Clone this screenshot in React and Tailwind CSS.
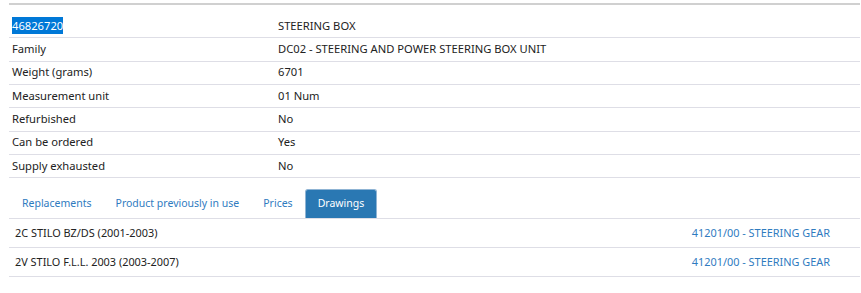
import React, { useState } from "react";

const details = [
  ["Family", "DC02 - STEERING AND POWER STEERING BOX UNIT"],
  ["Weight (grams)", "6701"],
  ["Measurement unit", "01 Num"],
  ["Refurbished", "No"],
  ["Can be ordered", "Yes"],
  ["Supply exhausted", "No"],
];

const tabs = ["Replacements", "Product previously in use", "Prices", "Drawings"];

const drawings = [
  ["2C STILO BZ/DS (2001-2003)", "41201/00 - STEERING GEAR"],
  ["2V STILO F.L.L. 2003 (2003-2007)", "41201/00 - STEERING GEAR"],
];

const App = () => {
  const [active, setActive] = useState("Drawings");

  return (
    <div className="w-[861px] h-[293px] bg-white pl-[9px] pr-[1px] pt-[3px] text-[11.2px] text-[#222] font-['Noto_Sans',sans-serif]">
      {/* Part details */}
      <div className="border-t-2 border-[#d0d0d0] pt-[10px]">
        <div className="flex h-[23.33px] items-center border-b border-[#dedee6]">
          <div className="w-[269px] pl-[3px]">
            <span className="bg-[#0078d7] text-white py-[1px]">46826720</span>
          </div>
          <div>STEERING BOX</div>
        </div>
        {details.map(([label, value]) => (
          <div
            key={label}
            className="flex h-[23.33px] items-center border-b border-[#dedee6]"
          >
            <div className="w-[269px] pl-[3px]">{label}</div>
            <div>{value}</div>
          </div>
        ))}
      </div>

      {/* Tabs */}
      <div className="flex items-end h-[41px] pl-[1px] border-b border-[#dedee6] text-[10.5px]">
        {tabs.map((t) => (
          <button
            key={t}
            onClick={() => setActive(t)}
            className={`h-[29px] px-[12px] rounded-t-[3px] ${
              active === t
                ? "bg-[#2a78b3] text-white border-t border-x border-[#8fb4d4]"
                : "text-[#2f7bbf]"
            }`}
          >
            {t}
          </button>
        ))}
      </div>

      {/* Drawings table */}
      {drawings.map(([model, drawing]) => (
        <div
          key={model}
          className="flex h-[29px] items-center justify-between border-b border-[#dedee6] pl-[6px] pr-[30px] text-[10.9px]"
        >
          <span>{model}</span>
          <a className="text-[#2f7bbf] cursor-pointer">{drawing}</a>
        </div>
      ))}
    </div>
  );
};

export default App;
